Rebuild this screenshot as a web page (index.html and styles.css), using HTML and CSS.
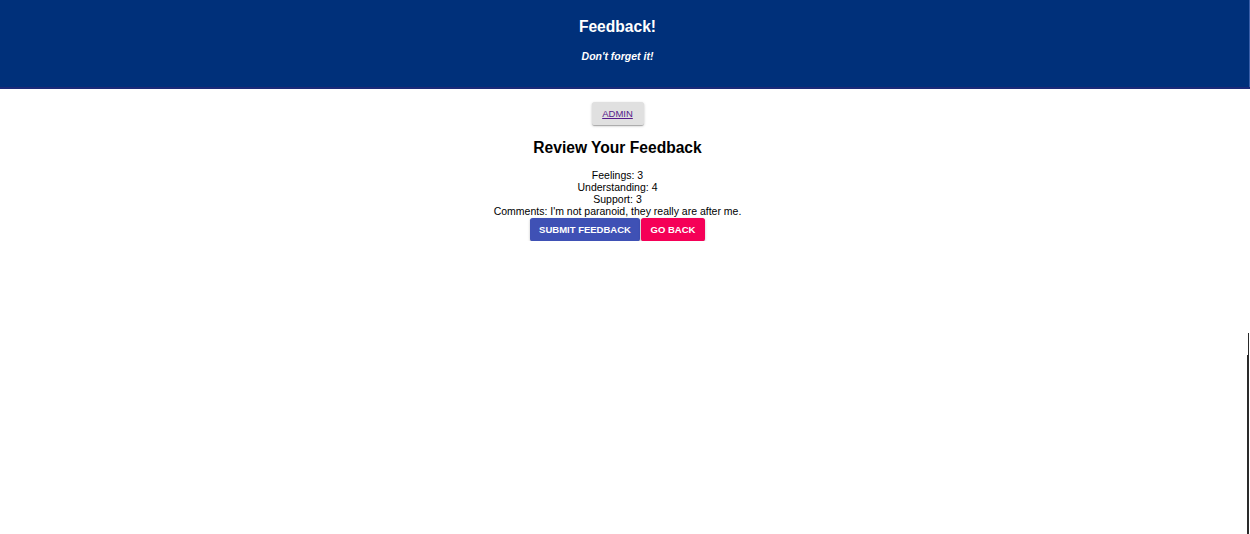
FILE: index.html
```html
<!DOCTYPE html>
<html lang="en">
<head>
<meta charset="utf-8">
<title>Feedback</title>
<link rel="stylesheet" href="styles.css">
</head>
<body>
<div class="app">
  <header class="app-header">
    <h1 class="app-title">Feedback!</h1>
    <h4 class="app-sub"><i>Don't forget it!</i></h4>
  </header>
  <main class="review">
    <div class="admin-row">
      <button class="btn btn-default"><a href="#" class="admin-link">ADMIN</a></button>
    </div>
    <h2 class="review-title">Review Your Feedback</h2>
    <div class="answers">
      <div>Feelings: 3</div>
      <div>Understanding: 4</div>
      <div>Support: 3</div>
      <div>Comments: I'm not paranoid, they really are after me.</div>
    </div>
    <div class="actions">
      <button class="btn btn-primary">SUBMIT FEEDBACK</button>
      <button class="btn btn-secondary">GO BACK</button>
    </div>
  </main>
</div>
<div class="edge edge-top"></div>
<div class="edge edge-bottom"></div>
</body>
</html>
```
FILE: styles.css
```css
html, body {
  margin: 0;
  padding: 0;
  background: #ffffff;
}
body {
  font-family: "Liberation Sans", Arial, Helvetica, sans-serif;
  font-size: 10.5px;
  line-height: 12px;
  color: #000;
  overflow: hidden;
}
.app {
  width: 1250px;
  text-align: center;
}
.app-header {
  background: #00307a;
  height: 87px;
  border-bottom: 2px solid #1c2a78;
  padding-right: 15px;
  box-sizing: content-box;
  display: flex;
  flex-direction: column;
  align-items: center;
  color: #fff;
  box-shadow: inset -4px 0 0 -3px #3a5fa8;
}
.app-title {
  margin: 18px 0 0;
  font-size: 15.6px;
  line-height: 18px;
  font-weight: 700;
}
.app-sub {
  margin: 14px 0 0;
  font-size: 10.5px;
  line-height: 12px;
  font-weight: 700;
}
.review {
  padding-right: 15px;
  display: flex;
  flex-direction: column;
  align-items: center;
}
.admin-row {
  margin-top: 13px;
}
.btn {
  font-family: "Liberation Sans", Arial, Helvetica, sans-serif;
  font-size: 9.5px;
  line-height: 12px;
  height: 23px;
  border: 0;
  border-radius: 2.6px;
  padding: 0 10px;
  cursor: pointer;
  box-shadow: 0 1px 3px rgba(0,0,0,0.2), 0 1px 1px rgba(0,0,0,0.14), 0 2px 1px -1px rgba(0,0,0,0.12);
}
.btn-default {
  background: #e0e0e0;
  padding: 0 10px;
  width: 52px;
}
.admin-link {
  color: #551a8b;
  text-decoration: underline;
}
.review-title {
  margin: 14px 0 0;
  font-size: 15.6px;
  line-height: 18px;
  font-weight: 700;
}
.answers {
  margin-top: 12px;
}
.actions {
  display: flex;
  gap: 1px;
  margin-top: 1px;
}
.btn-primary {
  background: #3f51b5;
  color: #fff;
  font-weight: 700;
  width: 110px;
  padding: 0;
}
.btn-secondary {
  background: #f50057;
  color: #fff;
  font-weight: 700;
  width: 64px;
  padding: 0;
}
.edge {
  position: fixed;
  background: #2a2a2a;
}
.edge-top {
  left: 1248px;
  top: 333px;
  width: 1px;
  height: 22px;
}
.edge-bottom {
  left: 1247px;
  top: 355px;
  width: 2px;
  height: 179px;
}
```
